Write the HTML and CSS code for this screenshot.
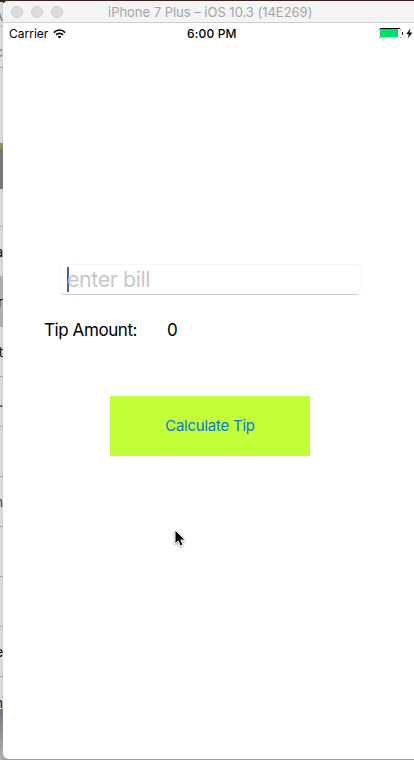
FILE: index.html
```
<!DOCTYPE html>
<html lang="en">
<head>
<meta charset="utf-8">
<title>Tip Calculator</title>
<link rel="stylesheet" href="styles.css">
</head>
<body>
<div class="desktop">
  <aside class="behind">
    <div class="row row-top"><span>A</span></div>
    <div class="row row-sub"><span>c</span></div>
    <div class="row row-head"></div>
    <div class="row row-dark"></div>
    <div class="row row-gap"></div>
    <div class="row"><span>a</span></div>
    <div class="row selected"><span>r</span></div>
    <div class="row"><span>t</span></div>
    <div class="row"><span>.</span></div>
    <div class="row"></div>
    <div class="row link"><span>n</span></div>
    <div class="row"></div>
    <div class="row"></div>
    <div class="row"><span>e</span></div>
    <div class="row row-last"><span>n</span></div>
    <div class="row-shadow"></div>
  </aside>
  <main class="window">
    <header class="titlebar">
      <div class="lights"><i></i><i></i><i></i></div>
      <span class="title">iPhone 7 Plus – iOS 10.3 (14E269)</span>
    </header>
    <div class="status">
      <div class="carrier"><span>Carrier</span>
        <svg width="13" height="10" viewBox="0 0 13 10" fill="none" stroke="#000" stroke-width="1.6"><path d="M.9 3.6C4 .2 9 .2 12.1 3.6M3 5.9c2-2 5-2 7 0"/><path d="M4.6 7.6c1.1-1 2.7-1 3.8 0L6.5 9.6z" fill="#000" stroke="none"/></svg>
      </div>
      <span class="time">6:00 PM</span>
      <div class="power">
        <svg width="35" height="12" viewBox="0 0 35 12"><path d="M1 .5h20" stroke="#000"/><path d="M0 1.5h1M21 1.5h1M0 9.5h1M21 9.5h1" stroke="#777"/><path fill="#03df67" d="M1 1h18v8H1z"/><path fill="#9aebc0" d="M1 9h18v1H1z"/><path d="M23.5 4v3" stroke="#222"/><path d="M31.2 1 27.6 6h2.4l-.8 3.8L33 4.7h-2.6z" stroke="#000" stroke-width=".3"/></svg>
      </div>
    </div>
    <section class="screen">
      <div class="bill"><span class="caret"></span><span class="placeholder">enter bill</span></div>
      <div class="result"><span class="label">Tip Amount:</span><span class="amount">0</span></div>
      <button class="calculate">Calculate Tip</button>
    </section>
  </main>
  <svg class="pointer" width="16" height="22" viewBox="0 0 16 22"><path d="M2 2v14l3.2-3 2.2 5 2.6-1.1-2.2-4.8h4.5z" fill="#000" stroke="#fff" stroke-width="1"/></svg>
</div>
</body>
</html>
```

FILE: styles.css
```
* { box-sizing: border-box; }
body { margin: 0; font-family: Inter, "Liberation Sans", sans-serif; color: #000; }
.desktop {
  position: relative;
  display: flex;
  width: 414px;
  height: 760px;
  padding-top: 1px;
  overflow: hidden;
  background: linear-gradient(#38221c 3px, #dcdcdc 3px, #dcdcdc 750px, #999 760px);
}
.behind { width: 3px; flex: none; overflow: hidden; margin-top: 1px; background: linear-gradient(90deg, #dedede, #cecece); }
.row {
  display: flex;
  align-items: center;
  justify-content: flex-end;
  height: 50px;
  border-bottom: 1px solid #aaa;
  font-size: 13px;
}
.row-top { height: 22px; margin-top: 3px; color: #777; border-color: #bbb; }
.row-sub { height: 41px; padding-top: 10px; color: #777; }
.row-head { height: 81px; border-bottom: 6px solid #7b955a; }
.row-dark { height: 40px; border: 0; background: #777; }
.row-gap { height: 38px; }
.selected { background: #aeaeae; }
.link { color: #333f9b; }
.row-last { height: 32px; border: 0; padding-top: 20px; }
.row-shadow { height: 60px; background: linear-gradient(#777, #bbb); }
.window {
  flex: 1;
  display: flex;
  flex-direction: column;
  height: 758px;
  overflow: hidden;
  background: #fff;
  border-radius: 5px 0 0 6px;
}
.titlebar {
  display: flex;
  align-items: center;
  height: 22px;
  flex: none;
  background: #f4f4f4;
  border-bottom: 1px solid #cdcdcd;
}
.lights { display: flex; gap: 8px; width: 105px; padding-left: 8px; }
.lights i { width: 12px; height: 12px; border: 1px solid #cecece; border-radius: 50%; background: #dcdcdc; }
.title { color: #a5a5a5; font-size: 13px; white-space: nowrap; letter-spacing: -.02px; }
.status {
  display: grid;
  grid-template-columns: 184px 1fr 35px;
  align-items: center;
  height: 21px;
  flex: none;
  padding-left: 6px;
  font-size: 12px;
}
.carrier { display: flex; align-items: center; gap: 5px; }
.time { margin-left: -6px; font-weight: 500; letter-spacing: .15px; }
.power { display: flex; }
.screen { display: flex; flex-direction: column; padding-top: 220px; }
.bill {
  display: flex;
  align-items: center;
  width: 302px;
  height: 31px;
  margin-left: 56px;
  padding-left: 7px;
  border: 1px solid #c8cacb;
  border-top-color: #f6f6f6;
  border-left-color: #f8f8f8;
  border-right-color: #f8f8f8;
  border-radius: 5px;
}
.caret { width: 2px; height: 25px; background: #4d59b8; }
.placeholder { margin: -2px 0 0 -2px; color: #c7c7c9; font-size: 21.5px; letter-spacing: -.45px; white-space: nowrap; }
.result { display: flex; align-items: center; height: 22px; margin: 24px 0 0 41px; font-size: 17px; }
.label { width: 123px; letter-spacing: -.42px; white-space: nowrap; }
.calculate {
  width: 200px;
  height: 60px;
  margin: 55px 0 0 107px;
  padding: 0 0 1px;
  border: 0;
  background: #c3ff39;
  color: #0878d0;
  font: 15px Inter, "Liberation Sans", sans-serif;
  letter-spacing: -.24px;
}
.pointer { position: absolute; left: 173px; top: 528px; filter: drop-shadow(0 1px 1px #999); }
```
